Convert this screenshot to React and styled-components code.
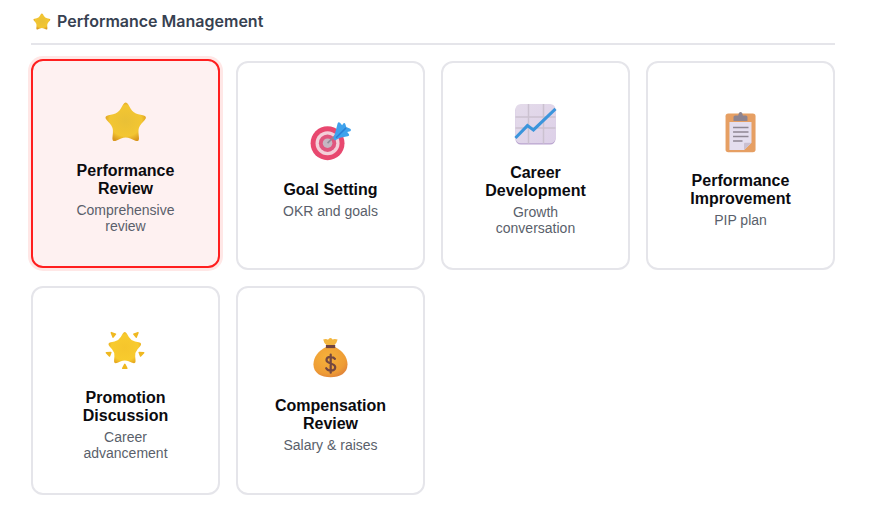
import styled, { createGlobalStyle } from "styled-components";

const GlobalStyle = createGlobalStyle`
  html, body {
    margin: 0;
    padding: 0;
    background: #ffffff;
    font-family: "Inter", "Liberation Sans", sans-serif;
  }
`;

// rounded star outline, corners softened with quadratics
const starPath = (cx, cy, R, r, soft) => {
  const pts = [];
  for (let i = 0; i < 10; i++) {
    const rad = i % 2 === 0 ? R : r;
    const a = -Math.PI / 2 + (i * Math.PI) / 5;
    pts.push([cx + rad * Math.cos(a), cy + rad * Math.sin(a)]);
  }
  const toward = (a, b, d) => {
    const len = Math.hypot(b[0] - a[0], b[1] - a[1]);
    return [a[0] + ((b[0] - a[0]) * d) / len, a[1] + ((b[1] - a[1]) * d) / len];
  };
  let d = "";
  pts.forEach((p, i) => {
    const prev = pts[(i + 9) % 10];
    const next = pts[(i + 1) % 10];
    const s = toward(p, prev, soft);
    const e = toward(p, next, soft);
    d += `${i === 0 ? "M" : "L"}${s[0].toFixed(2)} ${s[1].toFixed(2)}Q${p[0].toFixed(2)} ${p[1].toFixed(2)} ${e[0].toFixed(2)} ${e[1].toFixed(2)}`;
  });
  return d + "Z";
};

const StarIcon = ({ size = 48, id = "star" }) => (
  <svg width={size} height={size} viewBox="0 0 32 32">
    <defs>
      <radialGradient id={id} cx="0.5" cy="0.48" r="0.55">
        <stop offset="0" stopColor="#e9c036" />
        <stop offset="0.72" stopColor="#f3c632" />
        <stop offset="1" stopColor="#d9981f" />
      </radialGradient>
    </defs>
    <path d={starPath(15.8, 16.4, 15.6, 8.6, 3.4)} fill={`url(#${id})`} />
  </svg>
);

const GoalIcon = () => (
  <svg width="48" height="48" viewBox="0 0 32 32">
    <circle cx="13.7" cy="16.8" r="11.3" fill="#e8486f" />
    <circle cx="13.7" cy="16.8" r="8" fill="#f4cfd9" />
    <circle cx="13.7" cy="16.8" r="5.8" fill="#e0567e" />
    <circle cx="13.7" cy="16.8" r="3.2" fill="#c6b6c2" />
    <path d="M13.7 16.8L21 9.5" stroke="#8f8b98" strokeWidth="1.1" />
    <path d="M17.6 13.8L19.2 8.4 20.4 3.6Q21 2.2 22 3.2L23.4 4.8 24.2 3.6Q25.2 3 25.6 4.2L26.2 6 28.8 7.2Q30 8 28.8 8.8L26.8 9.4 28 10.8Q28.6 11.8 27.2 12.2L22 13.2 18.6 15Z" fill="#3fa2ec" />
    <path d="M19.4 13.2L26 6.6" stroke="#2a80d6" strokeWidth="1" />
  </svg>
);

const ChartIcon = () => (
  <svg width="48" height="48" viewBox="0 0 32 32">
    <defs>
      <linearGradient id="chartBg" x1="0" y1="0" x2="1" y2="1">
        <stop offset="0" stopColor="#e4dbea" />
        <stop offset="1" stopColor="#ddd0e8" />
      </linearGradient>
    </defs>
    <rect x="2.3" y="2.6" width="26.7" height="26.4" rx="3.6" fill="#b9a4cf" />
    <rect x="2.3" y="2" width="26.7" height="26.2" rx="3.6" fill="url(#chartBg)" />
    <path d="M11 2V28.4M21 2V28.4M2.3 10.7H29M2.3 18H29" stroke="#cbc1d0" strokeWidth="1" />
    <path d="M2.3 24.7L10.3 16.4 14.3 19.3 29 5.3" fill="none" stroke="#3b95dc" strokeWidth="2" />
  </svg>
);

const ClipboardIcon = () => (
  <svg width="48" height="48" viewBox="0 0 32 32">
    <rect x="5.7" y="3" width="20" height="25.8" rx="1.8" fill="#e69f63" />
    <path d="M8.3 8.7H23V22.5L18 27.3H8.3Z" fill="#e4deef" />
    <path d="M18 27.3V23Q18 22.5 18.6 22.5H23Z" fill="#c9bfd0" />
    <path d="M11 8V5.4Q11 4.4 12.2 4.4H14.2Q14.4 2 15.7 2 17 2 17.2 4.4H19.2Q20.3 4.4 20.3 5.4V8Z" fill="#8d8490" />
    <path d="M10.7 12.3H21M10.7 15.3H21M10.7 18.3H21M10.7 21.3H17" stroke="#8e8794" strokeWidth="1" />
  </svg>
);

const SparkleIcon = () => (
  <svg width="48" height="48" viewBox="0 0 32 32">
    <defs>
      <radialGradient id="sparkle" cx="0.5" cy="0.5" r="0.55">
        <stop offset="0" stopColor="#f5c52c" />
        <stop offset="0.75" stopColor="#f8cb2e" />
        <stop offset="1" stopColor="#e7a91f" />
      </radialGradient>
    </defs>
    <path d={starPath(15.2, 15.4, 12.6, 7, 2.8)} fill="url(#sparkle)" />
    <g fill="#efb820" stroke="#efb820" strokeWidth="1" strokeLinejoin="round">
      <path d="M6.2 4.4L9 5.4 7.4 7.4Z" />
      <path d="M24 4.4L21.2 5.4 22.8 7.4Z" />
      <path d="M2.9 17.8L5.9 17.6 5 20Z" />
      <path d="M27.8 17.8L24.8 17.6 25.7 20Z" />
      <path d="M15.2 25.6L13.8 28.2H16.6Z" />
    </g>
  </svg>
);

const BagIcon = () => (
  <svg width="48" height="48" viewBox="0 0 32 32">
    <defs>
      <radialGradient id="bag" cx="0.42" cy="0.35" r="0.75">
        <stop offset="0" stopColor="#f6b23a" />
        <stop offset="0.7" stopColor="#ee9c35" />
        <stop offset="1" stopColor="#dc7c3b" />
      </radialGradient>
    </defs>
    <path d="M12.7 8.6C7.8 11 4.3 15.2 4.3 20.2 4.3 26.3 9.5 28.8 15.7 28.8S27 26.3 27 20.2C27 15.2 23.5 11 18.7 8.6Z" fill="url(#bag)" />
    <path d="M12.6 7.2H18.8V9.4H12.6Z" fill="#6f4340" />
    <path d="M10.8 3.6Q13 3 14 3.8 15.4 1.8 17 3.6 18.4 3 20.4 3.6 19.6 6.6 18.2 7.4H13Q11.4 6.4 10.8 3.6Z" fill="#f3b63f" />
    <path d="M18.6 16.6C18 15.6 17 15.2 15.8 15.2 14.2 15.2 13 16.1 13 17.4 13 20.3 18.8 19 18.8 22.2 18.8 23.6 17.4 24.4 15.8 24.4 14.4 24.4 13.4 23.9 12.8 22.8M15.8 13.8V25.8" fill="none" stroke="#744740" strokeWidth="1.5" strokeLinecap="round" />
  </svg>
);

const items = [
  { id: "review", title: "Performance Review", sub: "Comprehensive review", icon: <StarIcon id="reviewStar" />, active: true },
  { id: "goal", title: "Goal Setting", sub: "OKR and goals", icon: <GoalIcon /> },
  { id: "career", title: "Career Development", sub: "Growth conversation", icon: <ChartIcon /> },
  { id: "pip", title: "Performance Improvement", sub: "PIP plan", icon: <ClipboardIcon /> },
  { id: "promo", title: "Promotion Discussion", sub: "Career advancement", icon: <SparkleIcon /> },
  { id: "comp", title: "Compensation Review", sub: "Salary & raises", icon: <BagIcon /> },
];

export default function App() {
  return (
    <>
      <GlobalStyle />
      <Page>
        <Header>
          <HeaderIcon>
            <StarIcon size={20} id="headerStar" />
          </HeaderIcon>
          <HeaderTitle>Performance Management</HeaderTitle>
        </Header>
        <Grid>
          {items.map((item) => (
            <Card key={item.id} $active={item.active}>
              <IconBox>{item.icon}</IconBox>
              <Title>{item.title}</Title>
              <Sub>{item.sub}</Sub>
            </Card>
          ))}
        </Grid>
      </Page>
    </>
  );
}

const Page = styled.div`
  width: 804px;
  padding: 11px 39px 12px 31px;
`;

const Header = styled.div`
  display: flex;
  align-items: center;
  gap: 5.5px;
  height: 21px;
  padding-bottom: 11px;
  border-bottom: 2px solid #e5e5ea;
  margin-bottom: 16px;
`;

const HeaderIcon = styled.span`
  display: flex;
  margin-left: 0.5px;
`;

const HeaderTitle = styled.h2`
  margin: 0;
  font-size: 16px;
  line-height: 21px;
  font-weight: 600;
  color: #374151;
`;

const Grid = styled.div`
  display: grid;
  grid-template-columns: repeat(4, 189px);
  grid-auto-rows: 209px;
  gap: 16px;
`;

const Card = styled.div`
  box-sizing: border-box;
  display: flex;
  flex-direction: column;
  align-items: center;
  justify-content: center;
  padding: 0 32px 2px;
  text-align: center;
  border-radius: 12px;
  border: 2px solid ${(p) => (p.$active ? "#ff1f1f" : "#e5e5ea")};
  background: ${(p) => (p.$active ? "#fef1f1" : "#ffffff")};
  box-shadow: ${(p) => (p.$active ? "0 0 0 3px rgba(255, 59, 48, 0.12)" : "none")};
  transform: ${(p) => (p.$active ? "translateY(-2px)" : "none")};
`;

const IconBox = styled.div`
  display: flex;
  align-items: center;
  justify-content: center;
  height: 62px;
  margin-bottom: 8px;
`;

const Title = styled.div`
  font-family: "Liberation Sans", Arial, sans-serif;
  font-size: 16px;
  line-height: 18px;
  font-weight: 700;
  color: #0b0b0f;
  margin-bottom: 4px;
`;

const Sub = styled.div`
  font-family: "Liberation Sans", Arial, sans-serif;
  font-size: 14px;
  line-height: 16px;
  color: #5a5f6b;
`;
